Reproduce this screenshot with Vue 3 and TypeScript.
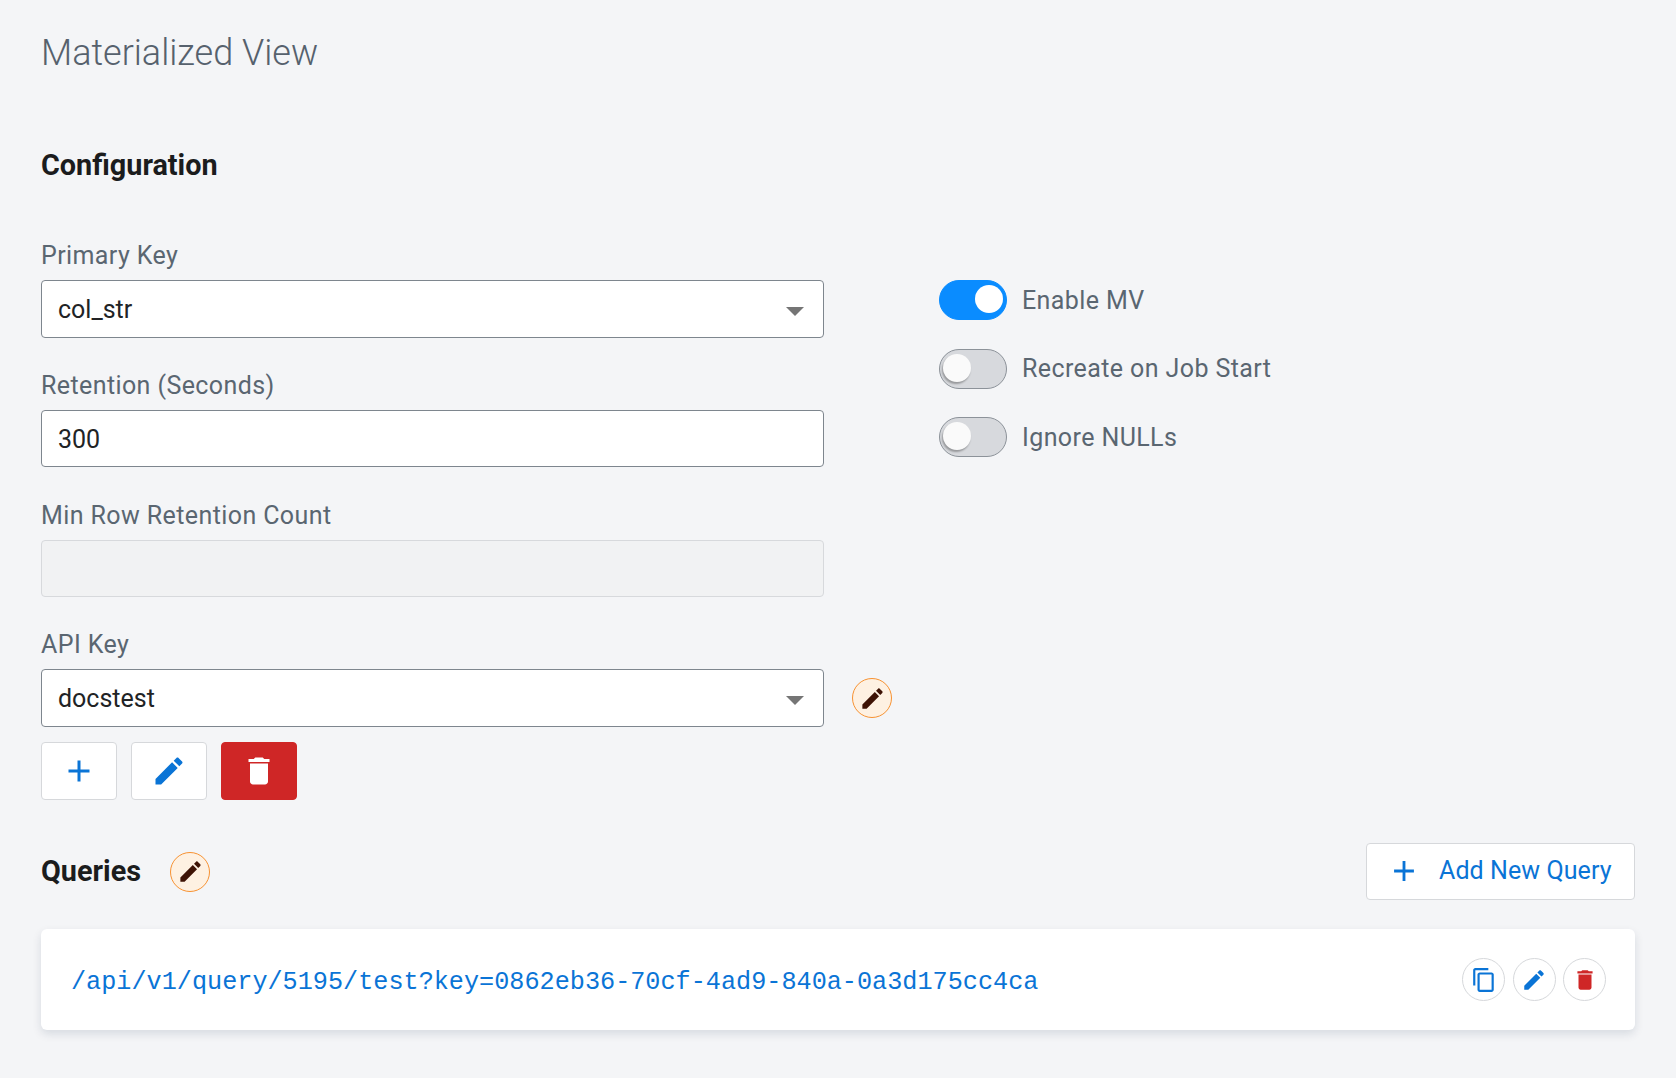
<script setup lang="ts">
const editPath = 'M3 17.25V21h3.75L17.81 9.94l-3.75-3.75L3 17.25zM20.71 7.04c.39-.39.39-1.02 0-1.41l-2.34-2.34c-.39-.39-1.02-.39-1.41 0l-1.83 1.83 3.75 3.75 1.83-1.83z'
const deletePath = 'M6 19c0 1.1.9 2 2 2h8c1.1 0 2-.9 2-2V7H6v12zM19 4h-3.5l-1-1h-5l-1 1H5v2h14V4z'
const plusPath = 'M19 13h-6v6h-2v-6H5v-2h6V5h2v6h6v2z'
const copyPath = 'M16 1H4c-1.1 0-2 .9-2 2v14h2V3h12V1zm3 4H8c-1.1 0-2 .9-2 2v14c0 1.1.9 2 2 2h11c1.1 0 2-.9 2-2V7c0-1.1-.9-2-2-2zm0 16H8V7h11v14z'
const toggles = [
  { label: 'Enable MV', on: true },
  { label: 'Recreate on Job Start', on: false },
  { label: 'Ignore NULLs', on: false },
]
</script>

<template>
  <div class="page">
    <h1 class="title">Materialized View</h1>
    <h2 class="section">Configuration</h2>
    <div class="config">
      <div class="fields">
        <div class="field">
          <label class="label">Primary Key</label>
          <div class="control select"><span>col_str</span><i class="caret"></i></div>
        </div>
        <div class="field">
          <label class="label">Retention (Seconds)</label>
          <div class="control"><span>300</span></div>
        </div>
        <div class="field tight">
          <label class="label">Min Row Retention Count</label>
          <div class="control disabled"></div>
        </div>
        <div class="field">
          <label class="label">API Key</label>
          <div class="with-tip">
            <div class="control select"><span>docstest</span><i class="caret"></i></div>
            <span class="tip tip-api">
              <svg viewBox="0 0 24 24" class="tip-icon"><path :d="editPath" /></svg>
            </span>
          </div>
        </div>
        <div class="actions">
          <button class="sq"><svg viewBox="0 0 24 24" class="sq-icon"><path :d="plusPath" /></svg></button>
          <button class="sq"><svg viewBox="0 0 24 24" class="sq-icon"><path :d="editPath" /></svg></button>
          <button class="sq danger"><svg viewBox="0 0 24 24" class="sq-icon"><path :d="deletePath" /></svg></button>
        </div>
      </div>
      <div class="toggles">
        <div v-for="t in toggles" :key="t.label" class="toggle-row">
          <span class="toggle" :class="{ on: t.on }"><span class="knob"></span></span>
          <span class="toggle-label">{{ t.label }}</span>
        </div>
      </div>
    </div>

    <div class="queries-head">
      <h2 class="section queries">Queries</h2>
      <span class="tip">
        <svg viewBox="0 0 24 24" class="tip-icon"><path :d="editPath" /></svg>
      </span>
      <button class="add">
        <svg viewBox="0 0 24 24" class="add-icon"><path :d="plusPath" /></svg>
        <span>Add New Query</span>
      </button>
    </div>

    <div class="card">
      <a class="url">/api/v1/query/5195/test?key=0862eb36-70cf-4ad9-840a-0a3d175cc4ca</a>
      <div class="round-group">
        <button class="round"><svg viewBox="0 0 24 24" class="round-icon"><path :d="copyPath" /></svg></button>
        <button class="round"><svg viewBox="0 0 24 24" class="round-icon"><path :d="editPath" /></svg></button>
        <button class="round red"><svg viewBox="0 0 24 24" class="round-icon"><path :d="deletePath" /></svg></button>
      </div>
    </div>
  </div>
</template>

<style>
html, body { background: #f4f5f7; }
</style>

<style scoped>
.page {
  box-sizing: border-box;
  width: 1676px;
  height: 1078px;
  padding: 28px 41px 0;
  background: #f4f5f7;
  font-family: Roboto, "Liberation Sans", sans-serif;
  overflow: hidden;
}
.title {
  margin: 0;
  font-size: 36px;
  line-height: 50px;
  font-weight: 300;
  color: #56616d;
}
.section {
  margin: 0;
  font-size: 28.8px;
  line-height: 38px;
  font-weight: 700;
  color: #1b1c1d;
}
.page > .section { margin-top: 68px; }
.queries { padding-bottom: 2px; }
.config {
  display: flex;
  margin-top: 54px;
}
.fields {
  width: 783px;
  flex: none;
}
.field { margin-bottom: 31px; }
.field.tight { margin-bottom: 30px; }
.label {
  display: block;
  font-size: 25px;
  line-height: 36px;
  letter-spacing: .4px;
  color: #5a6671;
  margin-bottom: 6px;
}
.control {
  box-sizing: border-box;
  width: 783px;
  height: 57px;
  border: 1px solid #7e868e;
  border-radius: 4px;
  background: #fff;
  padding: 1px 16px 0;
  display: flex;
  align-items: center;
  justify-content: space-between;
  font-size: 25px;
  color: #212325;
}
.control.select {
  height: 58px;
  margin-bottom: -1px;
}
.control.disabled {
  background: #f1f2f3;
  border-color: #d7d9dc;
}
.caret {
  display: block;
  width: 0;
  height: 0;
  margin-right: 3px;
  margin-top: 4px;
  border-left: 9px solid transparent;
  border-right: 9px solid transparent;
  border-top: 9px solid #757575;
}
.with-tip {
  position: relative;
  width: 783px;
}
.tip {
  box-sizing: border-box;
  display: inline-flex;
  align-items: center;
  justify-content: center;
  width: 40px;
  height: 40px;
  border-radius: 50%;
  border: 1px solid #f79232;
  background: #fef1e2;
}
.tip-api {
  position: absolute;
  left: 811px;
  top: 9px;
}
.tip-icon {
  width: 27px;
  height: 27px;
  fill: #3e1305;
}
.actions {
  display: flex;
  gap: 14px;
  margin-top: -16px;
}
.sq {
  box-sizing: border-box;
  width: 76px;
  height: 58px;
  padding: 0;
  display: flex;
  align-items: center;
  justify-content: center;
  background: #fff;
  border: 1px solid #d6d8db;
  border-radius: 4px;
}
.sq.danger {
  background: #cf2626;
  border-color: #cf2626;
}
.sq-icon {
  width: 36px;
  height: 36px;
  fill: #0a74d6;
}
.danger .sq-icon { fill: #fff; }
.toggles {
  margin-left: 115px;
  padding-top: 42px;
  display: flex;
  flex-direction: column;
  gap: 28.5px;
}
.toggle-row {
  display: flex;
  align-items: center;
  gap: 15px;
}
.toggle {
  box-sizing: border-box;
  position: relative;
  display: block;
  width: 68px;
  height: 40px;
  border-radius: 20px;
  background: #d7d9dd;
  border: 1px solid #8c9299;
}
.toggle.on {
  background: #0a8cff;
  border-color: #0a8cff;
}
.knob {
  position: absolute;
  left: 3px;
  top: 4px;
  width: 28px;
  height: 28px;
  border-radius: 50%;
  background: #fafafa;
  box-shadow: -1px 2px 2px rgba(0, 0, 0, .3);
}
.on .knob {
  left: 35px;
  background: #fff;
  box-shadow: none;
}
.toggle-label {
  font-size: 25px;
  letter-spacing: .4px;
  color: #5a6671;
}
.queries-head {
  display: flex;
  align-items: center;
  margin-top: 43px;
}
.queries-head .tip { margin-left: 29px; }
.add {
  box-sizing: border-box;
  margin-left: auto;
  width: 269px;
  height: 57px;
  padding: 0 0 2px 20px;
  display: flex;
  align-items: center;
  gap: 18px;
  background: #fff;
  border: 1px solid #d6d8db;
  border-radius: 4px;
  font-family: inherit;
  font-size: 25px;
  letter-spacing: .08px;
  color: #0a74d6;
}
.add-icon {
  width: 34px;
  height: 34px;
  fill: #0a74d6;
  flex: none;
}
.card {
  box-sizing: border-box;
  margin-top: 29px;
  height: 101px;
  padding: 0 29px 0 30px;
  display: flex;
  align-items: center;
  justify-content: space-between;
  background: #fff;
  border-radius: 6px;
  box-shadow: 0 4px 10px rgba(9, 30, 66, .12);
}
.url {
  font-family: "Liberation Mono", monospace;
  font-size: 25.2px;
  line-height: 30px;
  padding-top: 6px;
  color: #0a74d6;
}
.round-group {
  display: flex;
  gap: 7.5px;
}
.round {
  box-sizing: border-box;
  width: 43px;
  height: 43px;
  padding: 0;
  display: flex;
  align-items: center;
  justify-content: center;
  background: #fff;
  border: 1px solid #d6d8db;
  border-radius: 50%;
}
.round-icon {
  width: 26px;
  height: 26px;
  fill: #0a74d6;
}
.red .round-icon { fill: #cf2626; }
</style>
